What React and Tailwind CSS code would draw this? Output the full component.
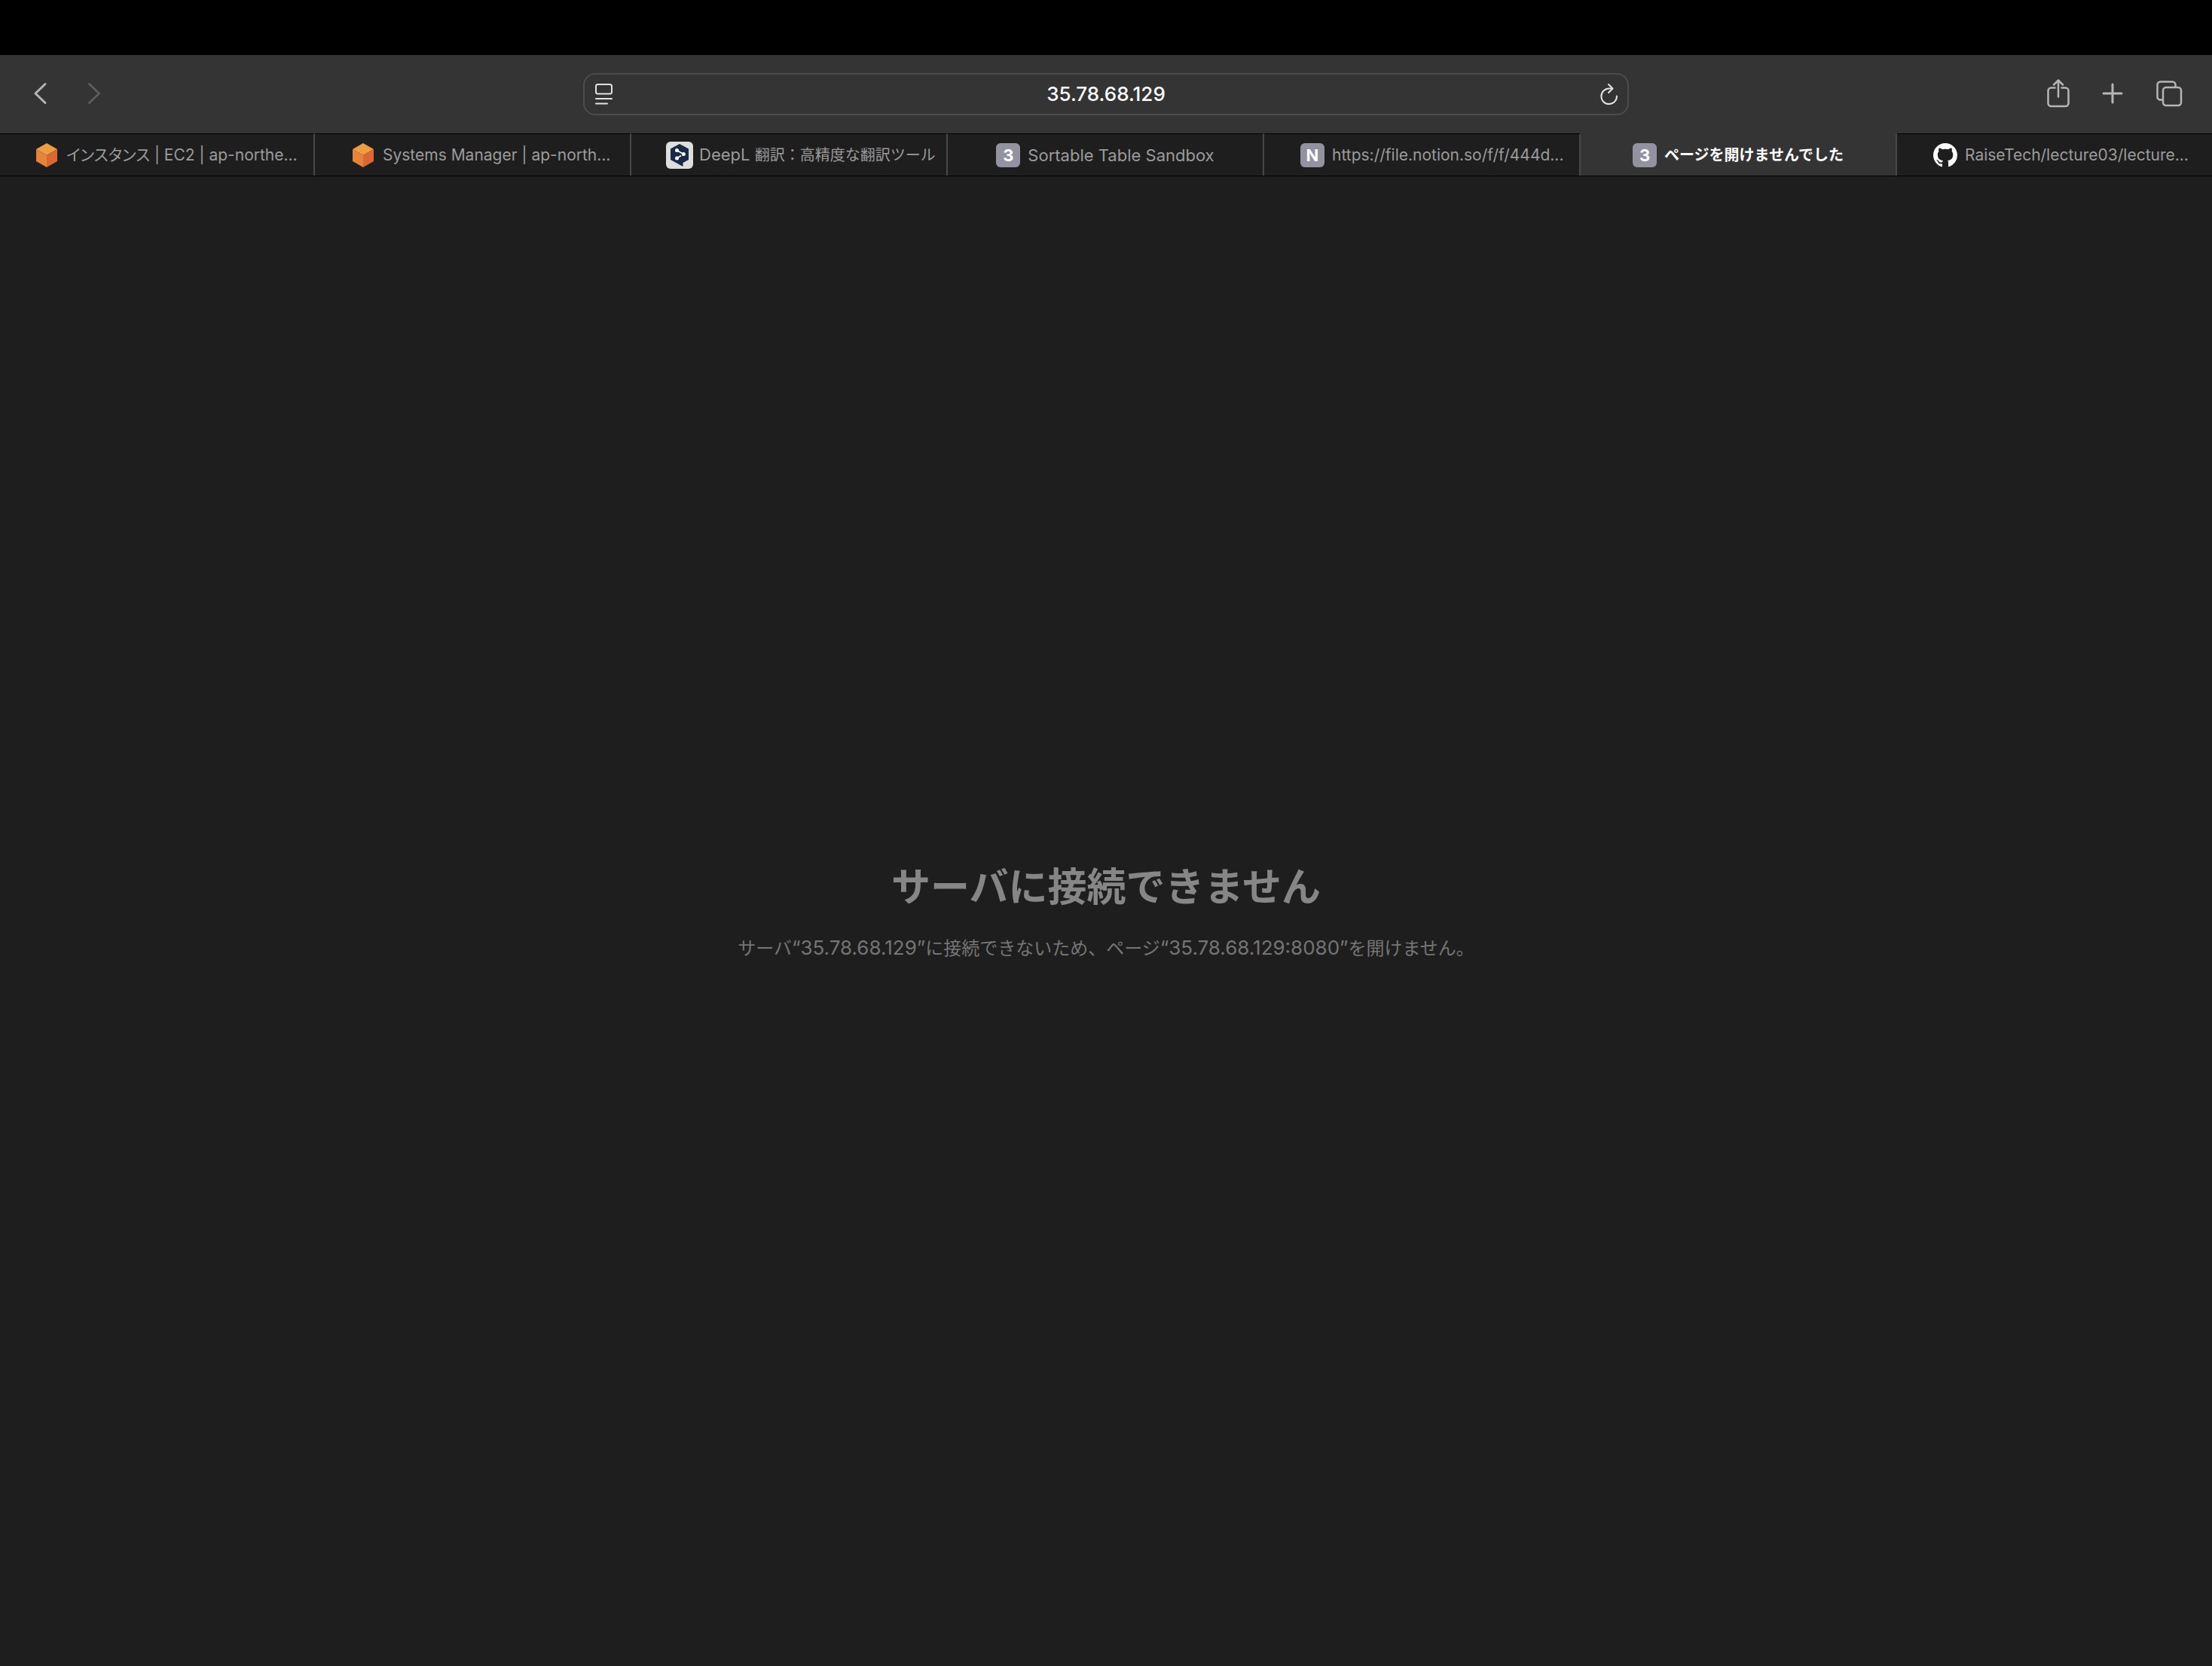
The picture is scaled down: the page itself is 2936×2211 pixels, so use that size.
import React from "react";

const CubeIcon = () => (
  <svg viewBox="0 0 32 32" className="size-8 shrink-0" aria-hidden="true">
    <path d="M16 0 30 8 16 16 2 8Z" fill="#f09c42" />
    <path d="M2 8 16 16V32L2 24Z" fill="#e5833a" />
    <path d="M30 8 16 16V32L30 24Z" fill="#da6833" />
  </svg>
);

const DeepLIcon = () => (
  <svg viewBox="0 0 36 36" className="-mx-0.5 size-9 shrink-0" aria-hidden="true">
    <rect width="36" height="36" rx="6" fill="#dedede" />
    <path d="M18 3 30 9.600V24L22.500 28V33L17 30 6 24V9.600Z" fill="#172b47" />
    <g stroke="none" fill="#fff">
      <path d="M14.500 11.500 23 16.500M20 18.500 14.500 22" fill="none" stroke="#fff" strokeWidth="1.600" />
      <circle cx="14.500" cy="11.500" r="2.500" />
      <circle cx="23.300" cy="16.500" r="2.500" />
      <circle cx="14.500" cy="22" r="2.500" />
    </g>
  </svg>
);

const GitHubIcon = () => (
  <svg viewBox="0 0 16 16" className="size-8 shrink-0" fill="#fff" aria-hidden="true">
    <path d="M8 0C3.580 0 0 3.580 0 8c0 3.540 2.290 6.530 5.470 7.590.4.070.55-.17.55-.38 0-.19-.01-.82-.01-1.490-2.010.37-2.530-.49-2.690-.94-.09-.23-.48-.94-.82-1.130-.28-.15-.68-.52-.01-.53.63-.01 1.080.58 1.230.82.72 1.210 1.870.87 2.330.66.07-.52.28-.87.51-1.070-1.780-.2-3.640-.89-3.640-3.950 0-.87.31-1.590.82-2.150-.08-.2-.36-1.020.08-2.120 0 0 .67-.21 2.200.82.64-.18 1.320-.27 2-.27s1.360.09 2 .27c1.530-1.040 2.200-.82 2.200-.82.44 1.100.16 1.920.08 2.120.51.56.82 1.270.82 2.150 0 3.070-1.870 3.750-3.650 3.950.29.25.54.73.54 1.480 0 1.070-.01 1.930-.01 2.200 0 .21.15.46.55.38A8.010 8.010 0 0 0 16 8c0-4.420-3.580-8-8-8Z" />
  </svg>
);

const Letter = ({ children }) => (
  <span className="flex size-8 shrink-0 items-center justify-center rounded-md bg-[#9392a0] text-[22px] leading-8 font-bold text-white" aria-hidden="true">
    {children}
  </span>
);

const tabs = [
  {
    icon: <CubeIcon />,
    label: (
      <span className="text-[21px]">
        <span className="[font-feature-settings:'palt']">インスタンス</span> | EC2 | ap-northe...
      </span>
    ),
  },
  { icon: <CubeIcon />, label: <span className="text-[21px]">Systems Manager | ap-north...</span> },
  {
    icon: <DeepLIcon />,
    label: (
      <>
        DeepL <span className="text-[20px]">翻訳：高精度な翻訳ツール</span>
      </>
    ),
  },
  { icon: <Letter>3</Letter>, label: "Sortable Table Sandbox" },
  { icon: <Letter>N</Letter>, label: <span className="text-[21px]">https://file.notion.so/f/f/444d...</span> },
  { icon: <Letter>3</Letter>, label: <span className="text-[20px]">ページを開けませんでした</span>, active: true },
  { icon: <GitHubIcon />, label: <span className="text-[21px]">RaiseTech/lecture03/lecture...</span> },
];

function Tab({ icon, label, active }) {
  return (
    <button
      type="button"
      role="tab"
      aria-selected={!!active}
      className={
        "flex h-14 min-w-0 flex-1 items-center border-t border-r-2 border-r-[#484848] text-[22px] leading-8 whitespace-nowrap " +
        (active
          ? "border-t-[#343434] bg-[#343434] font-bold text-white"
          : "border-t-black bg-[#1e1e1e] text-[#9b9b9b]")
      }
    >
      <span className="min-w-12 flex-1" />
      {icon}
      <span className="ml-2.5">{label}</span>
      <span className="min-w-4 flex-1" />
    </button>
  );
}

const line = { fill: "none", stroke: "currentColor", strokeLinecap: "round", strokeLinejoin: "round" };

function Toolbar() {
  return (
    <header className="grid h-[104px] grid-cols-[1fr_47.3%_1fr] items-center bg-[#343434] text-[#b5b5b5]">
      <nav className="flex gap-10 pb-0.5 pl-9">
        <button type="button" aria-label="戻る">
          <svg viewBox="0 0 32 32" className="size-8" {...line} strokeWidth="3">
            <path d="M24 3.500 11 16 24 28.500" />
          </svg>
        </button>
        <button type="button" aria-label="進む" disabled className="text-[#5c5c5c]">
          <svg viewBox="0 0 32 32" className="size-8" {...line} strokeWidth="3">
            <path d="M10.500 3.500 23.500 16 10.500 28.500" />
          </svg>
        </button>
      </nav>
      <div className="flex h-14 items-center rounded-2xl border-2 border-[#4c4c4c] px-2.5 text-[#e2e2e2]">
        <button type="button" aria-label="リーダー">
          <svg viewBox="0 0 30 32" className="h-8 w-[30px]" {...line} strokeWidth="2">
            <rect x="5" y="3" width="21" height="12.500" rx="2.500" />
            <path d="M5 22H26M5 28.500H20" />
          </svg>
        </button>
        <input
          type="text"
          aria-label="アドレス"
          defaultValue="35.78.68.129"
          className="min-w-0 flex-1 bg-transparent text-center text-[26px] leading-8 font-medium text-white outline-none"
        />
        <button type="button" aria-label="再読み込み">
          <svg viewBox="0 0 30 32" className="h-8 w-[30px]" {...line} strokeWidth="2">
            <path d="M26 18.500A10.300 10.300 0 1 1 15.700 8.500H20" />
            <path d="M15 3 20.500 8.500 15 14" />
          </svg>
        </button>
      </div>
      <div className="flex items-center justify-end pr-9 pb-0.5">
        <button type="button" aria-label="共有" className="mr-9">
          <svg viewBox="0 0 40 40" className="size-10" {...line} strokeWidth="2.500">
            <path d="M15.500 12.500H10.500A4 4 0 0 0 6.500 16.500V33A4 4 0 0 0 10.500 37H29.500A4 4 0 0 0 33.500 33V16.500A4 4 0 0 0 29.500 12.500H24.500" />
            <path d="M20 24.500V3M14 8.500 20 2.500 26 8.500" />
          </svg>
        </button>
        <button type="button" aria-label="新規タブ" className="mr-10">
          <svg viewBox="0 0 32 32" className="size-8" {...line} strokeWidth="3">
            <path d="M16 4V28M4 16H28" />
          </svg>
        </button>
        <button type="button" aria-label="タブの概要">
          <svg viewBox="0 0 40 40" className="size-10" {...line} strokeWidth="2.500">
            <rect x="11" y="12" width="24" height="24" rx="4" />
            <path d="M10 28.500H7.500A4 4 0 0 1 3.500 24.500V8.500A4 4 0 0 1 7.500 4.500H23.500A4 4 0 0 1 27.500 8.500V10.500" />
          </svg>
        </button>
      </div>
    </header>
  );
}

export default function App() {
  return (
    <div className="flex min-h-screen flex-col overflow-x-hidden bg-[#1e1e1e] font-['Inter','Noto_Sans_CJK_JP',sans-serif]" lang="ja">
      <div className="h-[73px] bg-black" />
      <Toolbar />
      <div className="border-b border-black bg-[#1e1e1e]">
        <div className="-mx-0.5 flex" role="tablist">
          {tabs.map((tab, i) => (
            <Tab key={i} {...tab} />
          ))}
        </div>
      </div>
      <main className="flex flex-1 flex-col items-center justify-center pb-6 text-center">
        <h1 className="text-[52px] leading-[64px] font-bold text-[#868686]">サーバに接続できません</h1>
        <p className="mt-8 text-[24px] leading-8 text-[#757575]">
          サーバ<span className="text-[26px]">“35.78.68.129”</span>に接続できないため、ページ
          <span className="text-[26px]">“35.78.68.129:8080”</span>を開けません。
        </p>
      </main>
    </div>
  );
}
